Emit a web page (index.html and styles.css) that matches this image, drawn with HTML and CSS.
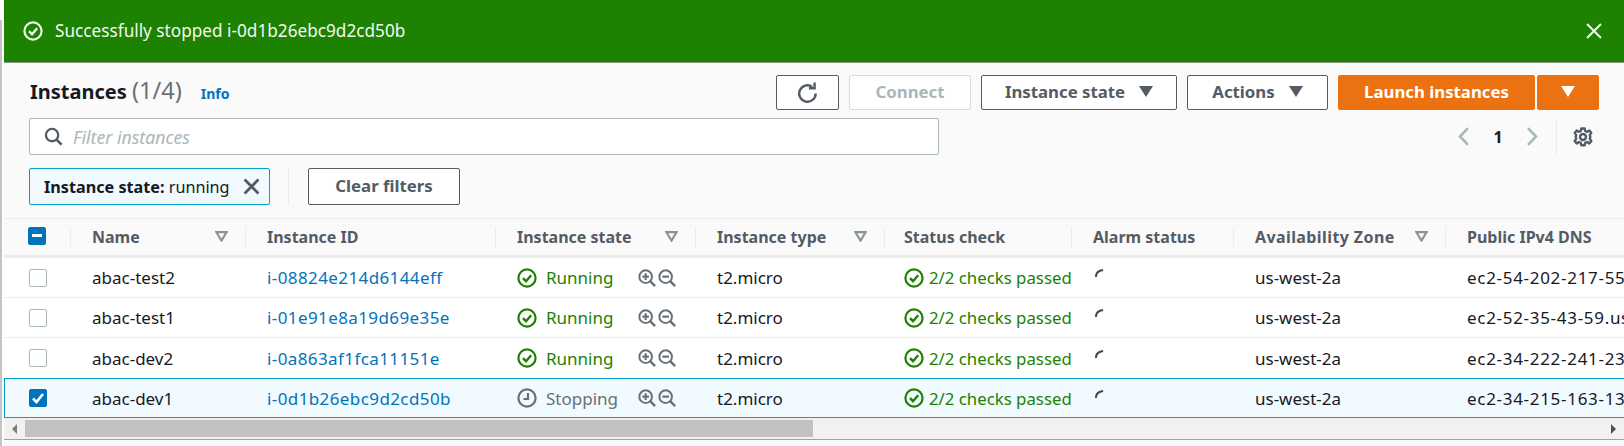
FILE: index.html
```html
<!DOCTYPE html>
<html lang="en">
<head>
<meta charset="utf-8">
<title>Instances</title>
<link rel="stylesheet" href="styles.css">
</head>
<body>
<svg class="defs" width="0" height="0" aria-hidden="true">
  <symbol id="ok" viewBox="0 0 20 20"><circle cx="10" cy="10" r="8.6" fill="none" stroke="currentColor" stroke-width="2.200"/><path d="M6 10.200l3 3 5.200-6" fill="none" stroke="currentColor" stroke-width="2.400"/></symbol>
  <symbol id="clock" viewBox="0 0 20 20"><circle cx="10" cy="10" r="8.6" fill="none" stroke="currentColor" stroke-width="2.200"/><path d="M11 5v6H6.500" fill="none" stroke="currentColor" stroke-width="2.200"/></symbol>
  <symbol id="zin" viewBox="0 0 20 20"><circle cx="8.500" cy="8.500" r="7" fill="none" stroke="currentColor" stroke-width="2.200"/><path d="M13.500 13.500l5.500 5.500" stroke="currentColor" stroke-width="2.600"/><path d="M4.800 8.500h7.400M8.500 4.800v7.400" stroke="currentColor" stroke-width="2.400"/></symbol>
  <symbol id="zout" viewBox="0 0 20 20"><circle cx="8.500" cy="8.500" r="7" fill="none" stroke="currentColor" stroke-width="2.200"/><path d="M13.500 13.500l5.500 5.500" stroke="currentColor" stroke-width="2.600"/><path d="M4.800 8.500h7.400" stroke="currentColor" stroke-width="2.400"/></symbol>
  <symbol id="sort" viewBox="0 0 12 10"><path d="M1.200 1h9.600L6 8.800z" fill="none" stroke="currentColor" stroke-width="2"/></symbol>
  <symbol id="spin" viewBox="0 0 10 10"><path d="M1 9C1 5 4 1.800 9 1.200" fill="none" stroke="currentColor" stroke-width="2.200"/></symbol>
</svg>
<div class="page">
  <div class="flash">
    <svg class="flash-icon"><use href="#ok"/></svg>
    <span class="flash-text">Successfully stopped i-0d1b26ebc9d2cd50b</span>
    <svg class="flash-close" viewBox="0 0 16 16"><path d="M1 1l14 14M15 1L1 15" stroke="currentColor" stroke-width="2" fill="none"/></svg>
  </div>
  <div class="toolbar">
    <div class="bar-top">
      <h1 class="title">Instances <span class="count">(1/4)</span></h1>
      <a class="info">Info</a>
      <div class="actions">
        <button class="btn btn-refresh"><svg class="ico-refresh" viewBox="0 0 20 20"><path d="M17 10.500a7.500 7.500 0 1 1-3.200-6.200" fill="none" stroke="currentColor" stroke-width="2.200"/><path d="M16 .5v5.200h-5.200" fill="none" stroke="currentColor" stroke-width="2.200"/></svg></button>
        <button class="btn btn-connect">Connect</button>
        <button class="btn btn-state">Instance state<span class="caret"></span></button>
        <button class="btn btn-actions">Actions<span class="caret"></span></button>
        <div class="split">
          <button class="btn btn-launch">Launch instances</button>
          <button class="btn btn-drop"><span class="caret caret-white"></span></button>
        </div>
      </div>
    </div>
    <div class="bar-mid">
      <div class="filter">
        <svg class="ico-search" viewBox="0 0 20 20"><circle cx="8.500" cy="8.500" r="6.500" fill="none" stroke="currentColor" stroke-width="2.400"/><path d="M13 13l5.500 5.500" stroke="currentColor" stroke-width="2.800"/></svg>
        <span class="placeholder">Filter instances</span>
      </div>
      <div class="pager">
        <svg class="chev" viewBox="0 0 13 19"><path d="M11 1.200L3 9.500l8 8.300" fill="none" stroke="currentColor" stroke-width="2.600"/></svg>
        <span class="page-num">1</span>
        <svg class="chev" viewBox="0 0 13 19"><path d="M2 1.200l8 8.300-8 8.300" fill="none" stroke="currentColor" stroke-width="2.600"/></svg>
        <span class="pager-sep"></span>
        <svg class="gear" viewBox="0 0 20 20"><path d="M8.300 1.500h3.400l.5 2.500 1.900.8 2.200-1.400 2 2.500-1.500 2 .5 2-.5 2 1.500 2-2 2.500-2.200-1.400-1.900.8-.5 2.500H8.300l-.5-2.500-1.900-.8-2.200 1.400-2-2.500 1.500-2-.5-2 .5-2-1.500-2 2-2.500 2.200 1.400 1.900-.8z" fill="none" stroke="currentColor" stroke-width="2.400" stroke-linejoin="round"/><circle cx="10" cy="10" r="3" fill="none" stroke="currentColor" stroke-width="2.400"/></svg>
      </div>
    </div>
    <div class="bar-low">
      <div class="token"><span><b>Instance state:</b> running</span><svg class="token-x" viewBox="0 0 16 16"><path d="M1.500 1.500l13 13M14.500 1.500l-13 13" stroke="currentColor" stroke-width="2.600" fill="none"/></svg></div>
      <span class="low-sep"></span>
      <button class="btn btn-clear">Clear filters</button>
    </div>
  </div>
  <div class="table-wrap">
    <table class="grid">
      <colgroup><col class="c0"><col class="c1"><col class="c2"><col class="c3"><col class="c4"><col class="c5"><col class="c6"><col class="c7"><col class="c8"></colgroup>
      <thead>
        <tr>
          <th class="sel"><span class="chk chk-on chk-head"><i class="dash"></i></span></th>
          <th><div class="th">Name<svg class="sort"><use href="#sort"/></svg></div></th>
          <th><div class="th">Instance ID</div></th>
          <th><div class="th">Instance state<svg class="sort"><use href="#sort"/></svg></div></th>
          <th><div class="th">Instance type<svg class="sort"><use href="#sort"/></svg></div></th>
          <th><div class="th th-status">Status check</div></th>
          <th><div class="th">Alarm status</div></th>
          <th><div class="th"><span class="th-wide">Availability Zone</span><svg class="sort"><use href="#sort"/></svg></div></th>
          <th><div class="th th-last">Public IPv4 DNS</div></th>
        </tr>
      </thead>
      <tbody>
        <tr>
          <td class="sel"><span class="chk"></span></td><td>abac-test2</td><td><a class="link">i-08824e214d6144eff</a></td>
          <td><div class="state ok"><svg class="st-ico"><use href="#ok"/></svg><span class="st-label">Running</span><svg class="zoom"><use href="#zin"/></svg><svg class="zoom"><use href="#zout"/></svg></div></td>
          <td>t2.micro</td><td><div class="check ok"><svg class="st-ico"><use href="#ok"/></svg>2/2 checks passed</div></td>
          <td><svg class="spin"><use href="#spin"/></svg></td><td>us-west-2a</td><td class="dns">ec2-54-202-217-55.us-west-2.compute.amazonaws.com</td>
        </tr>
        <tr>
          <td class="sel"><span class="chk"></span></td><td>abac-test1</td><td><a class="link">i-01e91e8a19d69e35e</a></td>
          <td><div class="state ok"><svg class="st-ico"><use href="#ok"/></svg><span class="st-label">Running</span><svg class="zoom"><use href="#zin"/></svg><svg class="zoom"><use href="#zout"/></svg></div></td>
          <td>t2.micro</td><td><div class="check ok"><svg class="st-ico"><use href="#ok"/></svg>2/2 checks passed</div></td>
          <td><svg class="spin"><use href="#spin"/></svg></td><td>us-west-2a</td><td class="dns">ec2-52-35-43-59.us-west-2.compute.amazonaws.com</td>
        </tr>
        <tr class="before-picked">
          <td class="sel"><span class="chk"></span></td><td>abac-dev2</td><td><a class="link">i-0a863af1fca11151e</a></td>
          <td><div class="state ok"><svg class="st-ico"><use href="#ok"/></svg><span class="st-label">Running</span><svg class="zoom"><use href="#zin"/></svg><svg class="zoom"><use href="#zout"/></svg></div></td>
          <td>t2.micro</td><td><div class="check ok"><svg class="st-ico"><use href="#ok"/></svg>2/2 checks passed</div></td>
          <td><svg class="spin"><use href="#spin"/></svg></td><td>us-west-2a</td><td class="dns">ec2-34-222-241-23.us-west-2.compute.amazonaws.com</td>
        </tr>
        <tr class="picked">
          <td class="sel"><span class="chk chk-on"><svg class="tick" viewBox="0 0 14 14"><path d="M2 7.500l3.500 3.500L12 3" fill="none" stroke="#fff" stroke-width="2.600"/></svg></span></td><td>abac-dev1</td><td><a class="link">i-0d1b26ebc9d2cd50b</a></td>
          <td><div class="state stopping"><svg class="st-ico"><use href="#clock"/></svg><span class="st-label">Stopping</span><svg class="zoom"><use href="#zin"/></svg><svg class="zoom"><use href="#zout"/></svg></div></td>
          <td>t2.micro</td><td><div class="check ok"><svg class="st-ico"><use href="#ok"/></svg>2/2 checks passed</div></td>
          <td><svg class="spin"><use href="#spin"/></svg></td><td>us-west-2a</td><td class="dns">ec2-34-215-163-13.us-west-2.compute.amazonaws.com</td>
        </tr>
      </tbody>
    </table>
  </div>
  <div class="scrollbar">
    <span class="arrow arrow-l"></span>
    <div class="track"><div class="thumb"></div></div>
    <span class="arrow arrow-r"></span>
  </div>
</div>
</body>
</html>
```
FILE: styles.css
```css
* { box-sizing: border-box; }
html, body { margin: 0; height: 100%; overflow: hidden; }
body { padding-left: 4px; background: linear-gradient(#c4c4c4, #c4c4c4) 0 20px / 2px 100% no-repeat #fff; font-family: "Noto Sans", "Open Sans", sans-serif; font-size: 17px; color: #16191f; }
.defs { display: block; height: 0; width: 0; }
.page { height: 446px; background: #fafafa; display: flex; flex-direction: column; }

.flash { height: 63px; flex: none; display: flex; align-items: center; background: #1d8102; color: #f4f8f2; border-bottom: 1px solid #87958a; padding: 0 22px 1px 19px; }
.flash-icon { width: 20px; height: 20px; flex: none; }
.flash-text { margin-left: 12px; font-size: 17.200px; }
.flash-close { width: 16px; height: 16px; margin-left: auto; }

.toolbar { height: 155px; flex: none; padding: 12px 25px 0; }
.bar-top { display: flex; align-items: center; height: 35px; }
.title { margin: 0 0 3px 1px; font-size: 20px; font-weight: 700; line-height: 30px; }
.count { font-weight: 400; font-size: 23.500px; color: #687078; }
.info { margin-left: 19px; margin-top: 2px; font-size: 14px; font-weight: 700; color: #0073bb; }
.actions { margin-left: auto; display: flex; gap: 10px; height: 35px; }
.btn { font: 700 16.800px "Noto Sans", sans-serif; height: 100%; border: 1px solid #545b64; border-radius: 2px; background: #fff; color: #545b64; display: flex; align-items: center; justify-content: center; padding: 0 0 2px; }
.btn-refresh { width: 63px; padding: 0; }
.ico-refresh { width: 22px; height: 22px; }
.btn-connect { width: 122px; color: #aab7b8; border-color: #d5dbdb; }
.btn-state { width: 196px; }
.btn-actions { width: 141px; }
.caret { width: 0; height: 0; margin-left: 14px; border-left: 7px solid transparent; border-right: 7px solid transparent; border-top: 11px solid #545b64; }
.caret-white { margin-left: 0; border-top-color: #fff; }
.split { display: flex; gap: 2px; }
.btn-launch, .btn-drop { background: #ec7211; border-color: #ec7211; color: #fff; }
.btn-launch { width: 197px; }
.btn-drop { width: 62px; }

.bar-mid { display: flex; align-items: center; margin-top: 8px; height: 37px; }
.filter { width: 910px; height: 37px; background: #fff; border: 1px solid #aab7b8; border-radius: 2px; display: flex; align-items: center; padding-left: 14px; }
.ico-search { width: 19px; height: 19px; color: #545b64; }
.placeholder { margin-left: 10px; font-style: italic; color: #aab7b8; font-size: 17.700px; }
.pager { margin-left: auto; display: flex; align-items: center; height: 36px; padding-right: 6px; }
.chev { width: 13px; height: 19px; color: #aab7b8; }
.page-num { width: 24px; margin: 0 16px; text-align: center; font-weight: 700; font-size: 16px; }
.pager-sep { width: 1px; height: 36px; background: #eaeded; margin: 0 16px 0 17px; }
.gear { width: 20px; height: 20px; color: #545b64; }

.bar-low { display: flex; align-items: center; margin-top: 13px; height: 37px; }
.token { width: 241px; height: 37px; border: 1px solid #00a1c9; border-radius: 2px; background: #f1faff; display: flex; align-items: center; justify-content: space-between; padding: 0 9px 0 14px; white-space: nowrap; font-size: 16.200px; }
.token-x { width: 17px; height: 17px; color: #545b64; }
.low-sep { width: 1px; height: 37px; background: #eaeded; margin: 0 19px 0 18px; }
.btn-clear { width: 152px; height: 37px; }

.table-wrap { flex: none; height: 200px; overflow: hidden; border-top: 1px solid #eaeded; }
.grid { border-collapse: separate; border-spacing: 0; table-layout: fixed; width: 1641px; }
.c0 { width: 66px; } .c1 { width: 175px; } .c2 { width: 250px; } .c3 { width: 200px; }
.c4 { width: 189px; } .c5 { width: 187px; } .c6 { width: 162px; } .c7 { width: 212px; } .c8 { width: 400px; }
.grid th { height: 39px; padding: 0; background: #fafafa; border-bottom: 3px solid #eaeded; text-align: left; font-weight: 700; color: #545b64; font-size: 16px; vertical-align: middle; }
.th { height: 20px; display: flex; align-items: center; justify-content: space-between; border-left: 1px solid #eaeded; padding: 0 17px 0 21px; white-space: nowrap; margin-top: -1px; }
.th-last { justify-content: flex-start; }
.th-status { padding-left: 19px; }
.th-wide { letter-spacing: .4px; }
.sort { width: 13px; height: 11px; color: #879596; }
.grid td { height: 40px; padding: 0 0 0 22px; background: #fff; border-bottom: 1px solid #eaeded; white-space: nowrap; font-size: 17px; vertical-align: middle; }
.grid td.sel, .grid th.sel { padding: 0 0 0 25px; }
.grid td.dns { letter-spacing: .7px; }
.before-picked td { border-bottom: 0; }
.picked td { background: #f1faff; border-top: 1px solid #00a1c9; border-bottom: 1px solid #00a1c9; }
.picked td:first-child { border-left: 1px solid #00a1c9; padding-left: 24px; }
.chk { display: block; width: 18px; height: 18px; background: #fff; border: 1px solid #aab7b8; border-radius: 2px; }
.chk-on { background: #0073bb; border-color: #0073bb; display: flex; align-items: center; justify-content: center; }
.chk-head { margin-top: -3px; margin-left: -1px; }
.dash { display: block; width: 10px; height: 3px; background: #fff; }
.tick { width: 14px; height: 14px; }
.link { color: #0073bb; letter-spacing: .4px; }
.state, .check { display: flex; align-items: center; font-size: 17px; }
.check { font-size: 16.800px; margin-left: -2px; }
.ok { color: #1d8102; }
.stopping { color: #687078; }
.st-ico { width: 20px; height: 20px; flex: none; margin-right: 9px; }
.check .st-ico { margin-right: 5px; }
.st-label { width: 92px; }
.zoom { width: 18px; height: 18px; flex: none; color: #687078; margin-right: 2px; }
.spin { display: block; width: 9px; height: 9px; margin: -8px 0 0 2px; color: #414750; }

.scrollbar { flex: none; height: 22px; background: #f1f1f1; border-bottom: 1px solid #9aa3a5; display: flex; align-items: center; padding-bottom: 2px; }
.track { flex: 1; height: 17px; margin-top: 2px; }
.thumb { width: 788px; height: 17px; background: #c1c1c1; }
.arrow { flex: none; width: 0; height: 0; border-top: 5px solid transparent; border-bottom: 5px solid transparent; }
.arrow-l { margin: 2px 8px 0; border-right: 5px solid #7d7d7d; }
.arrow-r { margin: 2px 8px 0 6px; border-left: 5px solid #505050; }
```
